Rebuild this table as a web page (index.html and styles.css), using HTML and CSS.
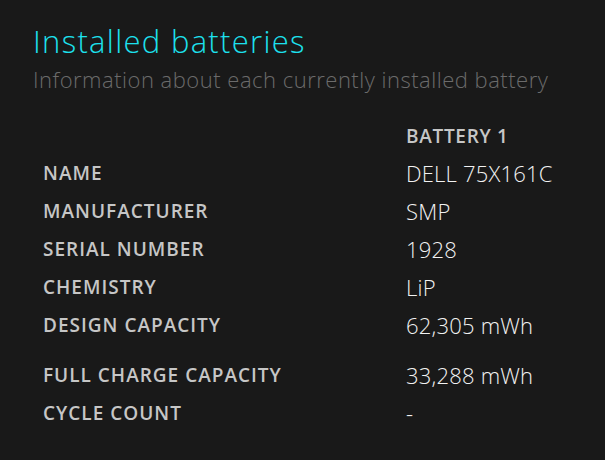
FILE: index.html
```html
<!DOCTYPE html>
<html lang="en">
<head>
<meta charset="utf-8">
<title>Installed batteries</title>
<link rel="stylesheet" href="styles.css">
</head>
<body>
<section class="report">
  <h1 class="title">Installed batteries</h1>
  <p class="subtitle">Information about each currently installed battery</p>
  <table class="grid">
    <thead>
      <tr class="head-row"><th class="label"></th><th class="col-head">BATTERY 1</th></tr>
    </thead>
    <tbody>
      <tr class="row"><td class="label">NAME</td><td class="value">DELL 75X161C</td></tr>
      <tr class="row"><td class="label">MANUFACTURER</td><td class="value">SMP</td></tr>
      <tr class="row"><td class="label">SERIAL NUMBER</td><td class="value">1928</td></tr>
      <tr class="row"><td class="label">CHEMISTRY</td><td class="value">LiP</td></tr>
      <tr class="row"><td class="label">DESIGN CAPACITY</td><td class="value">62,305 mWh</td></tr>
      <tr class="spacer"><td colspan="2"></td></tr>
      <tr class="row"><td class="label">FULL CHARGE CAPACITY</td><td class="value">33,288 mWh</td></tr>
      <tr class="row"><td class="label">CYCLE COUNT</td><td class="value">-</td></tr>
    </tbody>
  </table>
</section>
</body>
</html>
```

FILE: styles.css
```css
html, body {
  margin: 0;
  padding: 0;
  background: #191919;
}
body {
  font-family: "Open Sans", "Noto Sans", sans-serif;
  color: #f2f2f2;
}
.report {
  padding: 22px 0 0 33px;
}
.title {
  margin: 0;
  font-size: 31px;
  font-weight: 300;
  line-height: 39px;
  color: #1de1ee;
  letter-spacing: 1.3px;
}
.subtitle {
  margin: 3px 0 0;
  font-size: 22px;
  font-weight: 300;
  line-height: 30px;
  color: #6b6b6b;
  letter-spacing: 0.5px;
}
.grid {
  border-collapse: collapse;
  margin-top: 24px;
}
.grid th, .grid td {
  padding: 0 0 0 10px;
  text-align: left;
  vertical-align: middle;
}
.head-row {
  height: 36px;
}
.row {
  height: 38px;
}
.spacer {
  height: 12px;
}
.label {
  width: 353px;
  font-size: 19px;
  font-weight: 600;
  letter-spacing: 1px;
  color: #c6c6c6;
}
.col-head {
  font-size: 19px;
  font-weight: 600;
  letter-spacing: 0.7px;
  color: #c6c6c6;
}
.value {
  font-size: 22px;
  font-weight: 300;
  letter-spacing: 0.2px;
  color: #f2f2f2;
}
```
